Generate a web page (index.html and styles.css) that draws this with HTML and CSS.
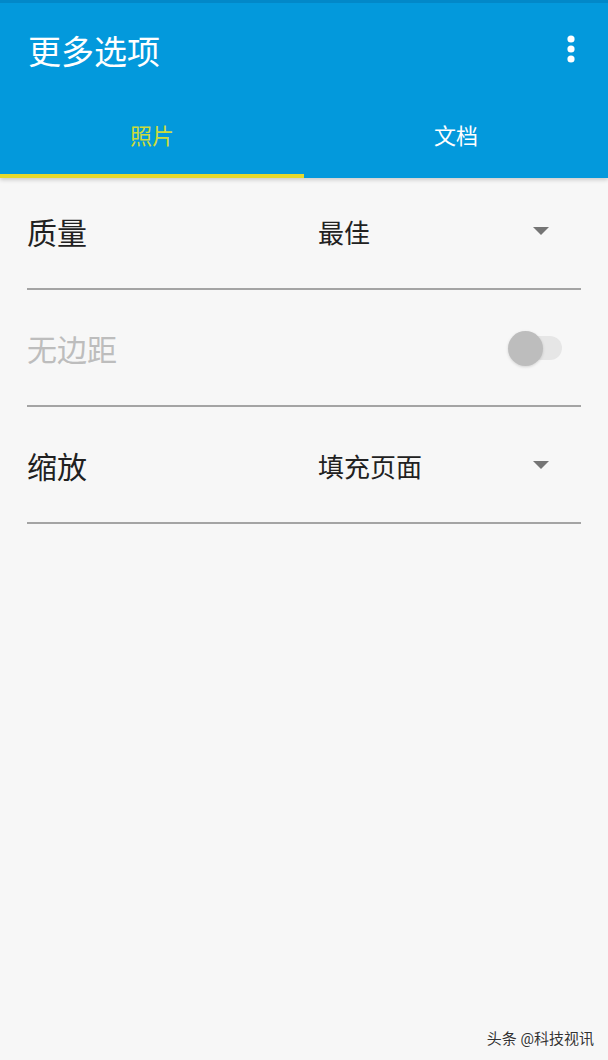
FILE: index.html
```html
<!DOCTYPE html>
<html lang="zh-CN">
<head>
<meta charset="UTF-8">
<meta name="viewport" content="width=device-width, initial-scale=1">
<title>更多选项</title>
<link rel="stylesheet" href="styles.css">
</head>
<body>
<div class="screen">

  <header class="appbar">
    <div class="toolbar">
      <h1 class="title">更多选项</h1>
      <span class="menu" aria-label="更多">
        <svg width="10" height="28" viewBox="0 0 10 28"><circle cx="5" cy="4" r="3.6" fill="#fff"/><circle cx="5" cy="14" r="3.6" fill="#fff"/><circle cx="5" cy="24" r="3.6" fill="#fff"/></svg>
      </span>
    </div>
    <nav class="tabs">
      <div class="tab active">照片</div>
      <div class="tab">文档</div>
    </nav>
  </header>

  <main class="options">
    <div class="row">
      <span class="label">质量</span>
      <div class="select">
        <span class="value">最佳</span>
        <span class="caret"></span>
      </div>
    </div>

    <div class="row disabled">
      <span class="label">无边距</span>
      <span class="switch"><span class="thumb"></span></span>
    </div>

    <div class="row">
      <span class="label">缩放</span>
      <div class="select">
        <span class="value">填充页面</span>
        <span class="caret"></span>
      </div>
    </div>
  </main>

  <div class="watermark">头条 @科技视讯</div>
</div>
</body>
</html>
```

FILE: styles.css
```css
/* 更多选项 画面 */

:root {
  --primary: #0399dc;
  --accent: #cddc39;
  --divider: #a4a4a4;
}

body {
  margin: 0;
  font-family: Roboto, "Noto Sans CJK SC", sans-serif;
  background: #f7f7f7;
  color: #212121;
}

.screen {
  width: 608px;
  height: 1060px;
  position: relative;
  overflow: hidden;
}

.appbar {
  background: var(--primary);
  border-top: 3px solid #0288c8;
  box-shadow: 0 2px 4px rgba(0,0,0,0.18);
}

.toolbar {
  height: 95px;
  display: flex;
  align-items: center;
  justify-content: space-between;
  padding: 0 32px 0 28px;
}

.title {
  margin: 0;
  margin-top: -2px;
  font-size: 33px;
  font-weight: 400;
  color: #fff;
}

.menu {
  display: flex;
  margin-top: -4px;
}

.tabs {
  display: flex;
  height: 80px;
}

.tab {
  flex: 1;
  display: flex;
  align-items: center;
  justify-content: center;
  padding-bottom: 4px;
  font-size: 22px;
  color: #fff;
  border-bottom: 4px solid transparent;
}

.tab.active {
  color: var(--accent);
  border-bottom-color: #e6d92c;
}

.options {
  padding: 0 27px;
}

.row {
  height: 117px;
  display: flex;
  align-items: center;
  border-bottom: 2px solid var(--divider);
  padding-top: 1px;
  box-sizing: border-box;
}

.row:first-child {
  height: 112px;
  padding-top: 0;
  padding-bottom: 4px;
}

.label {
  width: 291px;
  font-size: 30px;
  color: #212121;
}

.disabled .label {
  color: #bdbdbd;
}

.select {
  flex: 1;
  display: flex;
  align-items: center;
  justify-content: space-between;
  padding-right: 32px;
}

.value {
  font-size: 26px;
  color: #212121;
}

.caret {
  width: 0;
  height: 0;
  border-left: 8px solid transparent;
  border-right: 8px solid transparent;
  border-top: 8px solid #757575;
}

.switch {
  margin-left: auto;
  margin-right: 19px;
  width: 50px;
  height: 24px;
  border-radius: 12px;
  background: #e6e6e6;
  display: flex;
  align-items: center;
}

.thumb {
  width: 35px;
  height: 35px;
  border-radius: 50%;
  background: #bdbdbd;
  margin-left: -4px;
  box-shadow: 0 1px 3px rgba(0,0,0,0.15);
}

.watermark {
  position: absolute;
  right: 14px;
  bottom: 12px;
  font-size: 15px;
  color: #333;
  text-shadow: 0 0 2px #fff, 0 0 2px #fff;
}
```
